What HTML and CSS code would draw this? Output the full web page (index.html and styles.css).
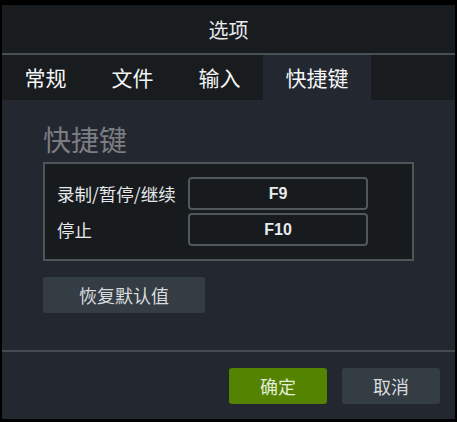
FILE: index.html
```html
<!DOCTYPE html>
<html lang="zh">
<head>
<meta charset="utf-8">
<link rel="stylesheet" href="styles.css">
</head>
<body>
<div class="dialog">
  <div class="titlebar">选项</div>
  <div class="tabs">
    <div class="tab">常规</div>
    <div class="tab">文件</div>
    <div class="tab">输入</div>
    <div class="tab active">快捷键</div>
  </div>
  <div class="content">
    <div class="heading">快捷键</div>
    <div class="keybox">
      <div class="label">录制/暂停/继续</div>
      <div class="keyfield">F9</div>
      <div class="label">停止</div>
      <div class="keyfield">F10</div>
    </div>
    <button class="btn restore">恢复默认值</button>
  </div>
  <div class="footer">
    <button class="btn ok">确定</button>
    <button class="btn cancel">取消</button>
  </div>
</div>
</body>
</html>
```
FILE: styles.css
```css
html, body {
  margin: 0;
  padding: 0;
  background: #000;
}
body {
  width: 457px;
  height: 422px;
  overflow: hidden;
  font-family: "Noto Sans CJK SC", "Noto Sans", sans-serif;
}
.dialog {
  margin: 5px 0 0 2px;
  width: 453px;
  height: 414px;
  background: #23272f;
  display: flex;
  flex-direction: column;
}
.titlebar {
  height: 48px;
  background: #181c1f;
  color: #e8eaec;
  font-size: 20px;
  display: flex;
  align-items: center;
  justify-content: center;
  border-bottom: 2px solid #475155;
}
.tabs {
  height: 45px;
  background: #181c1f;
  display: flex;
}
.tab {
  padding: 0 22.5px 1px;
  font-size: 21px;
  color: #f4f5f6;
  display: flex;
  align-items: center;
}
.tab.active {
  background: #23272f;
}
.content {
  height: 252px;
  padding: 0 0 0 41px;
  border-bottom: 2px solid #434c51;
  box-sizing: border-box;
  display: flex;
  flex-direction: column;
  align-items: flex-start;
}
.heading {
  margin-top: 23px;
  font-size: 28px;
  line-height: 32px;
  color: #7b7d81;
  margin-bottom: 7px;
}
.keybox {
  width: 371px;
  box-sizing: border-box;
  border: 2px solid #4d5559;
  background: #171b1e;
  padding: 13px 0 13px 12px;
  display: grid;
  grid-template-columns: 131px 180px;
  row-gap: 3px;
  align-items: center;
}
.label {
  font-size: 17.5px;
  color: #e6e8ea;
  line-height: 24px;
}
.keyfield {
  height: 33px;
  box-sizing: border-box;
  border: 2px solid #4f585c;
  border-radius: 4px;
  display: flex;
  align-items: center;
  justify-content: center;
  font-family: "Liberation Sans", Arial, sans-serif;
  font-weight: bold;
  font-size: 16px;
  color: #e8ebee;
}
.btn {
  border: none;
  border-radius: 3px;
  font-family: "Noto Sans CJK SC", "Noto Sans", sans-serif;
  font-size: 18px;
  color: #d8dbde;
  padding: 0;
  display: flex;
  align-items: center;
  justify-content: center;
}
.restore {
  margin-top: 16px;
  width: 162px;
  height: 36px;
  background: #343c44;
}
.footer {
  flex: 1;
  display: flex;
  justify-content: flex-end;
  align-items: flex-start;
  padding: 16px 15px 0 0;
  gap: 15px;
}
.ok, .cancel {
  width: 98px;
  height: 36px;
}
.ok {
  background: #538300;
  color: #e4ecd8;
}
.cancel {
  background: #343c44;
}
```
